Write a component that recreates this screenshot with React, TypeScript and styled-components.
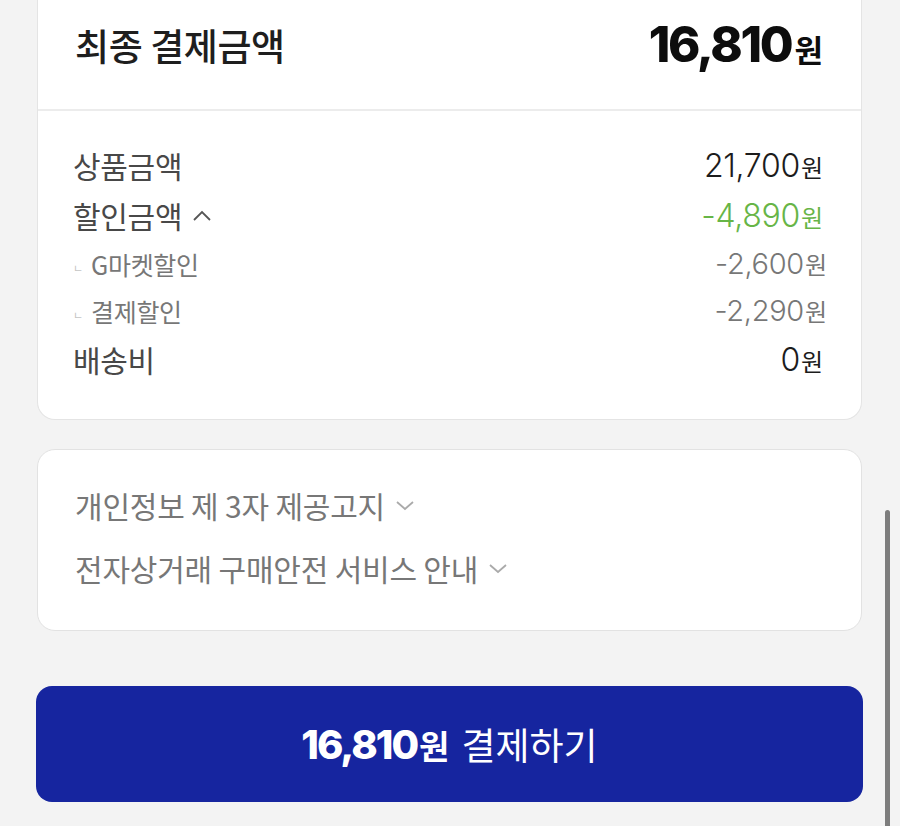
import styled, { createGlobalStyle } from "styled-components";

const GlobalStyle = createGlobalStyle`
  html, body {
    margin: 0;
    padding: 0;
    height: 826px;
    overflow: hidden;
    background: #f3f3f3;
  }
  body {
    font-family: "Noto Sans CJK KR", "Noto Sans", sans-serif;
  }
`;

const NUM_FONT = `Inter, "Noto Sans", sans-serif`;

type Row = {
  label: string;
  value: string;
  kind: "main" | "sub";
  tone?: "green";
  toggle?: boolean;
};

const rows: Row[] = [
  { label: "상품금액", value: "21,700", kind: "main" },
  { label: "할인금액", value: "-4,890", kind: "main", tone: "green", toggle: true },
  { label: "G마켓할인", value: "-2,600", kind: "sub" },
  { label: "결제할인", value: "-2,290", kind: "sub" },
  { label: "배송비", value: "0", kind: "main" },
];

const notices = ["개인정보 제 3자 제공고지", "전자상거래 구매안전 서비스 안내"];

export default function App() {
  return (
    <>
      <GlobalStyle />
      <Page>
        <SummaryCard>
          <TotalHeader>
            <TotalLabel>최종 결제금액</TotalLabel>
            <TotalValue>
              16,810<TotalWon>원</TotalWon>
            </TotalValue>
          </TotalHeader>
          <Breakdown>
            {rows.map((r) => (
              <PriceRow key={r.label} $kind={r.kind}>
                <Label $kind={r.kind}>
                  {r.kind === "sub" && <Branch>ㄴ</Branch>}
                  {r.label}
                  {r.toggle && (
                    <Chevron width="20" height="13" viewBox="0 0 20 13">
                      <path d="M2 11 L10 3 L18 11" fill="none" stroke="#555" strokeWidth="1.8" />
                    </Chevron>
                  )}
                </Label>
                <Amount $kind={r.kind} $tone={r.tone}>
                  {r.value}
                  <Won>원</Won>
                </Amount>
              </PriceRow>
            ))}
          </Breakdown>
        </SummaryCard>

        <NoticeCard>
          {notices.map((n) => (
            <NoticeRow key={n}>
              {n}
              <Chevron width="20" height="12" viewBox="0 0 20 12">
                <path d="M2 3 L10 10 L18 3" fill="none" stroke="#aaa" strokeWidth="1.8" />
              </Chevron>
            </NoticeRow>
          ))}
        </NoticeCard>

        <PayButton>
          <PayAmount>
            16,810<PayWon>원</PayWon>
          </PayAmount>
          <PayText>결제하기</PayText>
        </PayButton>
      </Page>
      <ScrollThumb />
    </>
  );
}

const Page = styled.div`
  padding: 0 38px 0 37px;
  display: flex;
  flex-direction: column;
`;

const SummaryCard = styled.section`
  background: #fff;
  border: 1px solid #e4e4e4;
  border-top: none;
  border-radius: 0 0 18px 18px;
`;

const TotalHeader = styled.div`
  height: 111px;
  box-sizing: border-box;
  padding: 0 38px 20px 37px;
  display: flex;
  align-items: center;
  justify-content: space-between;
  border-bottom: 2px solid #ececec;
`;

const TotalLabel = styled.h2`
  margin: 0;
  font-size: 37px;
  font-weight: 500;
  color: #1e1e1e;
  letter-spacing: -0.4px;
`;

const TotalValue = styled.div`
  font-family: ${NUM_FONT};
  font-size: 49px;
  font-weight: 800;
  letter-spacing: -2.3px;
  color: #0d0d0d;
  display: flex;
  align-items: baseline;
`;

const TotalWon = styled.span`
  font-family: "Noto Sans CJK KR", sans-serif;
  font-size: 31px;
  font-weight: 700;
  letter-spacing: 0;
  margin-left: 3px;
`;

const Breakdown = styled.div`
  padding: 29px 38px 35px 35px;
  display: flex;
  flex-direction: column;
`;

const PriceRow = styled.div<{ $kind: "main" | "sub" }>`
  height: ${(p) => (p.$kind === "main" ? "50px" : "47px")};
  display: flex;
  align-items: center;
  justify-content: space-between;
`;

const Label = styled.div<{ $kind: "main" | "sub" }>`
  display: flex;
  align-items: center;
  font-size: ${(p) => (p.$kind === "main" ? "30px" : "25px")};
  color: ${(p) => (p.$kind === "main" ? "#484848" : "#777")};
  letter-spacing: -0.3px;
`;

const Branch = styled.span`
  font-size: 11px;
  color: #c4c4c4;
  width: 18px;
  align-self: flex-end;
  margin-bottom: 6px;
`;

const Chevron = styled.svg`
  margin-left: 10px;
  flex: none;
`;

const Amount = styled.div<{ $kind: "main" | "sub"; $tone?: "green" }>`
  font-family: ${NUM_FONT};
  font-weight: 300;
  font-size: ${(p) => (p.$kind === "main" ? "32px" : "29px")};
  letter-spacing: -0.3px;
  color: ${(p) => (p.$tone === "green" ? "#67b547" : p.$kind === "main" ? "#1c1c1c" : "#777")};
  margin-right: ${(p) => (p.$kind === "main" ? "0" : "-4px")};
  display: flex;
  align-items: baseline;
`;

const Won = styled.span`
  font-family: "Noto Sans CJK KR", sans-serif;
  font-size: 24px;
  font-weight: 400;
  letter-spacing: 0;
  margin-left: 1px;
`;

const NoticeCard = styled.section`
  margin-top: 29px;
  background: #fff;
  border: 1px solid #e2e2e2;
  border-radius: 18px;
  padding: 23px 37px 31px;
  display: flex;
  flex-direction: column;
`;

const NoticeRow = styled.div`
  height: 63px;
  display: flex;
  align-items: center;
  font-size: 30px;
  color: #777;
  letter-spacing: -0.2px;
`;

const PayButton = styled.button`
  margin: 55px -1px 0;
  height: 116px;
  border: none;
  border-radius: 16px;
  background: #16259f;
  color: #fff;
  display: flex;
  align-items: center;
  justify-content: center;
  gap: 12px;
  padding: 0;
  cursor: pointer;
`;

const PayAmount = styled.span`
  font-family: ${NUM_FONT};
  font-size: 40px;
  font-weight: 800;
  letter-spacing: -2px;
  display: flex;
  align-items: baseline;
`;

const PayWon = styled.span`
  font-family: "Noto Sans CJK KR", sans-serif;
  font-size: 33px;
  font-weight: 700;
  letter-spacing: 0;
  margin-left: 2px;
`;

const PayText = styled.span`
  font-family: "Noto Sans CJK KR", sans-serif;
  font-size: 37px;
  font-weight: 400;
`;

const ScrollThumb = styled.div`
  position: fixed;
  right: 10px;
  top: 510px;
  width: 5px;
  height: 330px;
  border-radius: 3px;
  background: #7d7d7d;
`;
